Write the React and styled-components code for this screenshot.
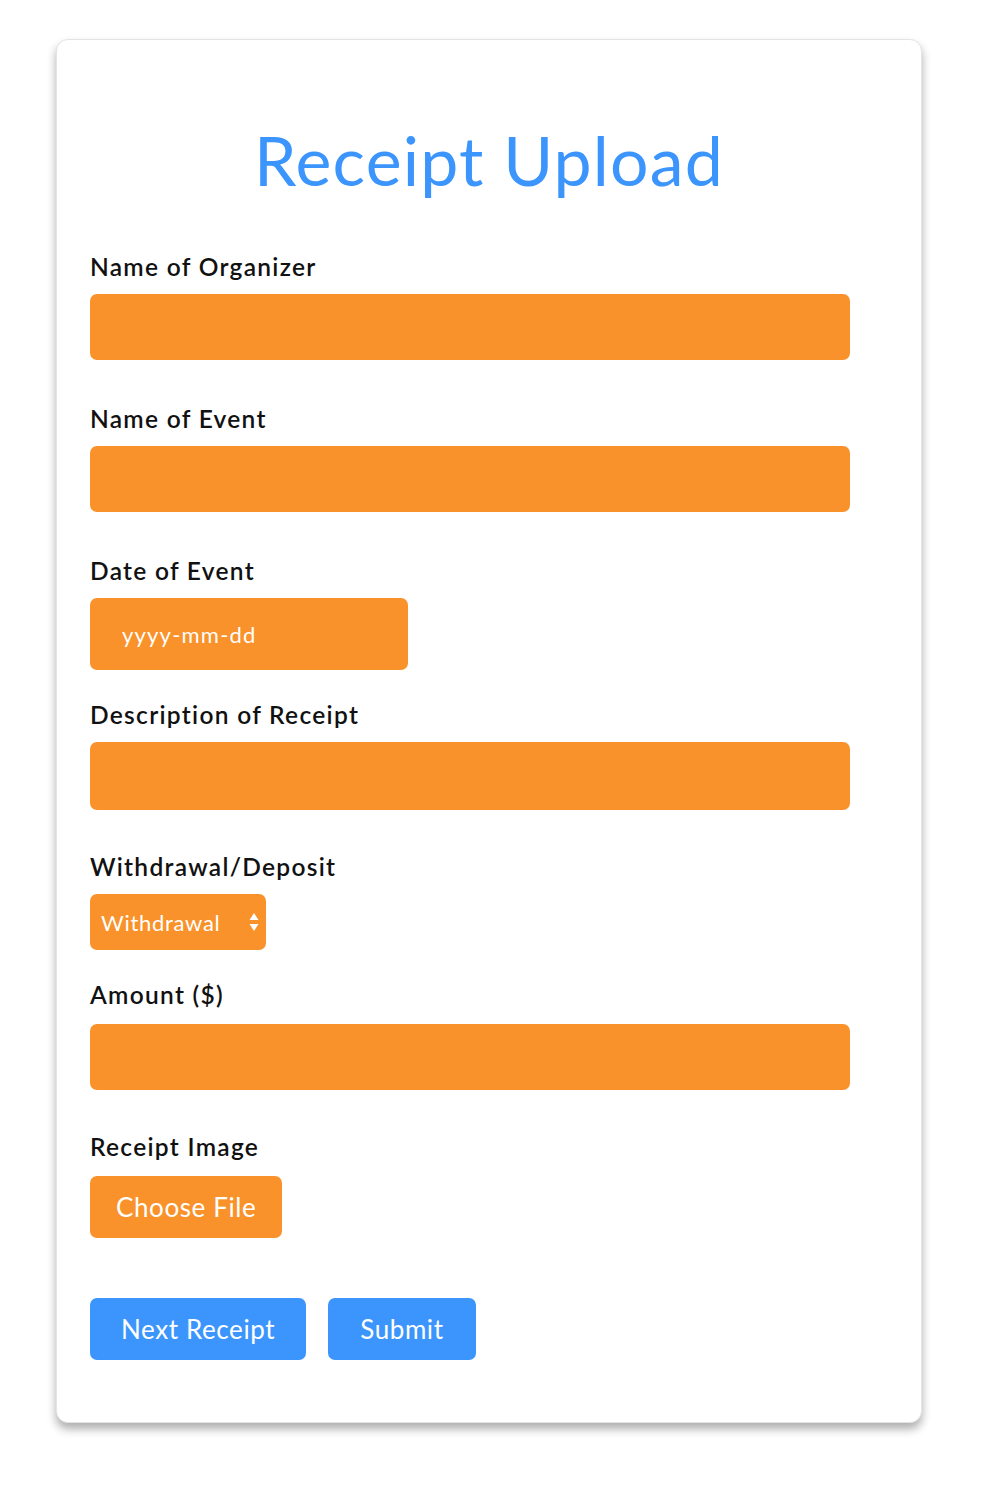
import styled, { createGlobalStyle } from 'styled-components';

const GlobalStyle = createGlobalStyle`
  body {
    margin: 0;
    background: #ffffff;
    font-family: Lato, "Open Sans", sans-serif;
  }
`;

const Page = styled.div`
  padding: 39px 0 60px 56px;
`;

const Card = styled.form`
  width: 866px;
  box-sizing: border-box;
  padding: 0 33px 62px;
  background: #fff;
  border: 1px solid #e4e4e4;
  border-radius: 12px;
  box-shadow: 0 6px 10px rgba(0, 0, 0, 0.32);
  display: flex;
  flex-direction: column;
  align-items: flex-start;
`;

const Title = styled.h1`
  align-self: stretch;
  text-align: center;
  margin: 78px 0 50px;
  font-size: 68px;
  line-height: 84px;
  font-weight: 400;
  color: #3b95fd;
  letter-spacing: 1.2px;
`;

const Label = styled.label`
  display: block;
  font-size: 24.5px;
  line-height: 30px;
  font-weight: 600;
  letter-spacing: 1.3px;
  color: #111;
  margin-bottom: ${({ gap }) => gap || 12}px;
`;

const TextInput = styled.input`
  display: block;
  box-sizing: border-box;
  width: ${({ width }) => width || 760}px;
  height: ${({ height }) => height || 66}px;
  margin: 0 0 ${({ after }) => after}px;
  padding: 0 32px;
  border: 0;
  border-radius: 7px;
  background: #f9922a;
  color: #fff;
  font-family: inherit;
  font-size: 22px;
  letter-spacing: 1.2px;
  outline: none;

  &::placeholder {
    color: #fff;
    opacity: 1;
  }
`;

const SelectWrap = styled.div`
  position: relative;
  width: 176px;
  height: 56px;
  margin-bottom: 30px;
`;

const Select = styled.select`
  appearance: none;
  width: 100%;
  height: 100%;
  box-sizing: border-box;
  padding: 0 0 0 11px;
  border: 0;
  border-radius: 7px;
  background: #f9922a;
  color: #fff;
  font-family: inherit;
  font-size: 22px;
  letter-spacing: 0.7px;
  outline: none;
`;

const Arrows = styled.svg`
  position: absolute;
  right: 7px;
  top: 18px;
  pointer-events: none;
`;

const Button = styled.button`
  height: 62px;
  padding: 0 ${({ pad }) => pad}px;
  border: 0;
  border-radius: 7px;
  background: ${({ tone }) => (tone === 'blue' ? '#3b95fd' : '#f9922a')};
  color: #fff;
  font-family: inherit;
  font-size: 26px;
  letter-spacing: 0.6px;
  cursor: pointer;
`;

const Actions = styled.div`
  display: flex;
  gap: 22px;
  margin-top: 60px;
`;

export default function App() {
  return (
    <>
      <GlobalStyle />
      <Page>
        <Card onSubmit={(e) => e.preventDefault()}>
          <Title>Receipt Upload</Title>

          <Label>Name of Organizer</Label>
          <TextInput type="text" after={44} />

          <Label>Name of Event</Label>
          <TextInput type="text" after={44} />

          <Label>Date of Event</Label>
          <TextInput type="text" placeholder="yyyy-mm-dd" width={318} height={72} after={30} />

          <Label>Description of Receipt</Label>
          <TextInput type="text" height={68} after={42} />

          <Label>Withdrawal/Deposit</Label>
          <SelectWrap>
            <Select defaultValue="withdrawal">
              <option value="withdrawal">Withdrawal</option>
              <option value="deposit">Deposit</option>
            </Select>
            <Arrows width="10" height="20" viewBox="0 0 10 20">
              <path d="M5 1 L9.5 8 H0.5 Z" fill="#fff" />
              <path d="M5 19 L9.5 12 H0.5 Z" fill="#fff" />
            </Arrows>
          </SelectWrap>

          <Label gap={14}>Amount ($)</Label>
          <TextInput type="text" after={42} />

          <Label gap={14}>Receipt Image</Label>
          <Button type="button" pad={26}>Choose File</Button>

          <Actions>
            <Button type="button" tone="blue" pad={31}>Next Receipt</Button>
            <Button type="submit" tone="blue" pad={32}>Submit</Button>
          </Actions>
        </Card>
      </Page>
    </>
  );
}
